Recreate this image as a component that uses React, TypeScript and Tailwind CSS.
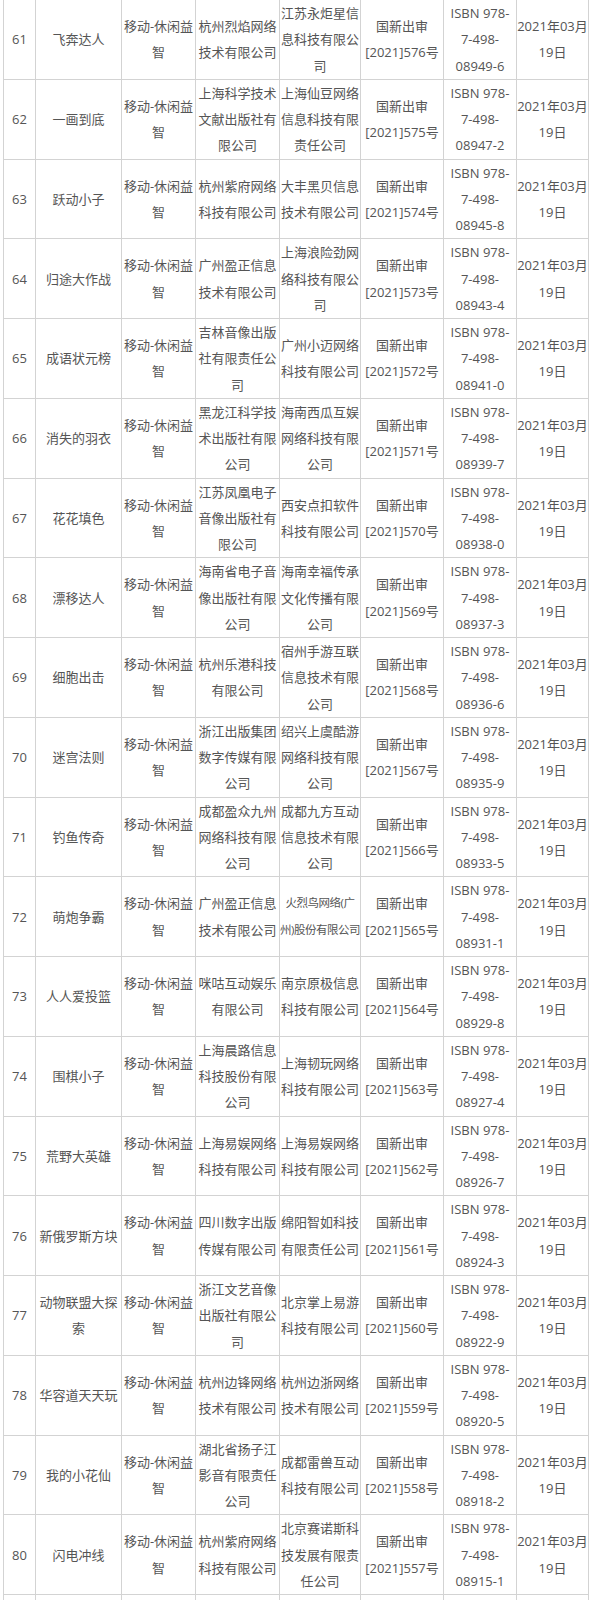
const rows: string[][] = [
  ['61', '飞奔达人', '杭州烈焰网络|技术有限公司', '江苏永炬星信|息科技有限公|司', '576', '08949-6'],
  ['62', '一画到底', '上海科学技术|文献出版社有|限公司', '上海仙豆网络|信息科技有限|责任公司', '575', '08947-2'],
  ['63', '跃动小子', '杭州紫府网络|科技有限公司', '大丰黑贝信息|技术有限公司', '574', '08945-8'],
  ['64', '归途大作战', '广州盈正信息|技术有限公司', '上海浪险劲网|络科技有限公|司', '573', '08943-4'],
  ['65', '成语状元榜', '吉林音像出版|社有限责任公|司', '广州小迈网络|科技有限公司', '572', '08941-0'],
  ['66', '消失的羽衣', '黑龙江科学技|术出版社有限|公司', '海南西瓜互娱|网络科技有限|公司', '571', '08939-7'],
  ['67', '花花填色', '江苏凤凰电子|音像出版社有|限公司', '西安点扣软件|科技有限公司', '570', '08938-0'],
  ['68', '漂移达人', '海南省电子音|像出版社有限|公司', '海南幸福传承|文化传播有限|公司', '569', '08937-3'],
  ['69', '细胞出击', '杭州乐港科技|有限公司', '宿州手游互联|信息技术有限|公司', '568', '08936-6'],
  ['70', '迷宫法则', '浙江出版集团|数字传媒有限|公司', '绍兴上虞酷游|网络科技有限|公司', '567', '08935-9'],
  ['71', '钓鱼传奇', '成都盈众九州|网络科技有限|公司', '成都九方互动|信息技术有限|公司', '566', '08933-5'],
  ['72', '萌炮争霸', '广州盈正信息|技术有限公司', '火烈鸟网络(广|州)股份有限公司', '565', '08931-1'],
  ['73', '人人爱投篮', '咪咕互动娱乐|有限公司', '南京原极信息|科技有限公司', '564', '08929-8'],
  ['74', '围棋小子', '上海晨路信息|科技股份有限|公司', '上海韧玩网络|科技有限公司', '563', '08927-4'],
  ['75', '荒野大英雄', '上海易娱网络|科技有限公司', '上海易娱网络|科技有限公司', '562', '08926-7'],
  ['76', '新俄罗斯方块', '四川数字出版|传媒有限公司', '绵阳智如科技|有限责任公司', '561', '08924-3'],
  ['77', '动物联盟大探|索', '浙江文艺音像|出版社有限公|司', '北京掌上易游|科技有限公司', '560', '08922-9'],
  ['78', '华容道天天玩', '杭州边锋网络|技术有限公司', '杭州边浙网络|技术有限公司', '559', '08920-5'],
  ['79', '我的小花仙', '湖北省扬子江|影音有限责任|公司', '成都雷兽互动|科技有限公司', '558', '08918-2'],
  ['80', '闪电冲线', '杭州紫府网络|科技有限公司', '北京赛诺斯科|技发展有限责|任公司', '557', '08915-1'],
];

function Lines({ text }: { text: string }) {
  const parts = text.split('|');
  return (
    <>
      {parts.map((p, i) => (
        <span key={i} className="block">
          {p}
        </span>
      ))}
    </>
  );
}

const cell = 'border border-[#d3d3d3] p-0 text-center align-middle whitespace-nowrap';

export default function App() {
  return (
    <div className="min-h-[1600px] bg-white">
      <table
        className="ml-[3px] -mt-px w-[585px] table-fixed border-collapse text-[13px] leading-[26.25px] text-[#555]"
        style={{ fontFamily: '"Open Sans", "Noto Sans CJK SC", sans-serif' }}
      >
        <colgroup>
          <col className="w-[32px]" />
          <col className="w-[86px]" />
          <col className="w-[74px]" />
          <col className="w-[84px]" />
          <col className="w-[81px]" />
          <col className="w-[83px]" />
          <col className="w-[73px]" />
          <col className="w-[72px]" />
        </colgroup>
        <tbody>
          {rows.map((r) => (
            <tr key={r[0]}>
              <td className={cell}>{r[0]}</td>
              <td className={cell}>
                <Lines text={r[1]} />
              </td>
              <td className={cell}>
                <Lines text="移动-休闲益|智" />
              </td>
              <td className={cell}>
                <Lines text={r[2]} />
              </td>
              {/* 72's operator name is longer, squeeze it into two lines */}
              <td className={r[0] === '72' ? `${cell} text-[11.5px] tracking-[-0.5px]` : cell}>
                <Lines text={r[3]} />
              </td>
              <td className={cell}>
                <Lines text={`国新出审|[2021]${r[4]}号`} />
              </td>
              <td className={cell}>
                <Lines text={`ISBN 978-|7-498-|${r[5]}`} />
              </td>
              <td className={cell}>
                <Lines text="2021年03月|19日" />
              </td>
            </tr>
          ))}
          <tr>
            <td className={cell}>&nbsp;</td>
            <td className={cell} />
            <td className={cell} />
            <td className={cell} />
            <td className={cell} />
            <td className={cell} />
            <td className={cell} />
            <td className={cell} />
          </tr>
        </tbody>
      </table>
    </div>
  );
}
